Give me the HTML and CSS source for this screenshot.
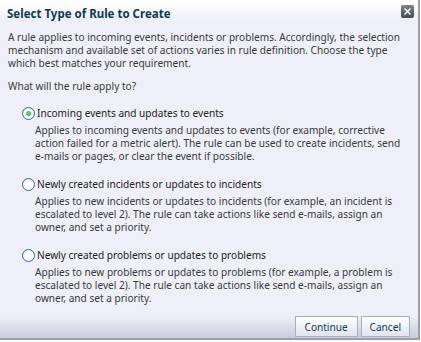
FILE: index.html
```html
<!DOCTYPE html>
<html>
    <head>
        <title>Select Type of Rule to Create</title>
        <link rel="stylesheet" href="styles.css">
    </head>
    <body>
        <div class="dialog">
            <!--HEADER-->
            <div class="dialog-header">
                <span class="dialog-title">Select Type of Rule to Create</span>
                <span class="close-btn">
                    <svg width="9" height="9" viewBox="0 0 9 9">
                        <path d="M1.5 1.5 L7.5 7.5 M7.5 1.5 L1.5 7.5" stroke="#ffffff" stroke-width="1.4" fill="none"/>
                    </svg>
                </span>
            </div>

            <!--BODY-->
            <div class="dialog-body">
                <p class="intro">A rule applies to incoming events, incidents or problems. Accordingly, the selection mechanism and available set of actions varies in rule definition. Choose the type which best matches your requirement.</p>
                <p class="question">What will the rule apply to?</p>

                <div class="option first">
                    <label class="option-label"><span class="radio checked"></span>Incoming events and updates to events</label>
                    <p class="option-desc">Applies to incoming events and updates to events (for example, corrective action failed for a metric alert). The rule can be used to create incidents, send <span class="nowrap">e-mails</span> or pages, or clear the event if possible.</p>
                </div>

                <div class="option">
                    <label class="option-label"><span class="radio"></span>Newly created incidents or updates to incidents</label>
                    <p class="option-desc">Applies to new incidents or updates to incidents (for example, an incident is escalated to level 2). The rule can take actions like send <span class="nowrap">e-mails</span>, assign an owner, and set a priority.</p>
                </div>

                <div class="option">
                    <label class="option-label"><span class="radio"></span>Newly created problems or updates to problems</label>
                    <p class="option-desc">Applies to new problems or updates to problems (for example, a problem is escalated to level 2). The rule can take actions like send <span class="nowrap">e-mails</span>, assign an owner, and set a priority.</p>
                </div>
            </div>

            <!--FOOTER-->
            <div class="dialog-footer">
                <button class="btn continue">Continue</button>
                <button class="btn">Cancel</button>
            </div>
        </div>
    </body>
</html>
```

FILE: styles.css
```css
body{
    margin: 0;
    background-color: #ffffff;
    font-family: "Noto Sans", sans-serif;
}

.dialog{
    width: 418px;
    height: 338px;
    background-color: #eeeff8;
    border-right: 2px solid #9d9fa8;
    border-bottom: 2px solid #9d9fa8;
    display: flex;
    flex-direction: column;
    color: #3a3a3a;
    font-size: 10.1px;
}

.dialog-header{
    height: 26px;
    display: flex;
    align-items: center;
    justify-content: space-between;
    padding: 0 4px 0 7px;
    background: linear-gradient(#ffffff 10%, #eeeff8 80%);
}

.dialog-title{
    font-weight: bold;
    font-size: 11.5px;
    color: #0e3a5a;
    margin-top: 1px;
}

.close-btn{
    width: 13px;
    height: 13px;
    display: flex;
    align-items: center;
    justify-content: center;
    background: linear-gradient(#7b838f, #434b57);
    border-radius: 2px;
    margin-top: -4px;
}

.dialog-body{
    flex: 1;
    padding: 5px 5px 0 8px;
}

.dialog-body p{
    margin: 0;
    line-height: 13px;
}

.nowrap{
    white-space: nowrap;
}

.dialog-body .question{
    margin-top: 10px;
}

.option{
    margin-top: 13px;
    padding-left: 14px;
}

.option.first{
    margin-top: 12px;
}

.option-label{
    display: flex;
    align-items: center;
    height: 16px;
    color: #222222;
}

.radio{
    width: 11px;
    height: 11px;
    border: 1px solid #2f66a6;
    border-radius: 50%;
    background: radial-gradient(circle at 60% 60%, #ffffff 40%, #d8e0ec);
    margin-right: 2px;
    position: relative;
}

.radio.checked::after{
    content: "";
    position: absolute;
    left: 3px;
    top: 3px;
    width: 5px;
    height: 5px;
    border-radius: 50%;
    background: radial-gradient(circle at 40% 40%, #7fd37f, #1f9a2f);
}

.dialog-body .option-desc{
    padding-left: 13px;
    margin-top: 3px;
}

.dialog-footer{
    height: 26px;
    display: flex;
    justify-content: flex-end;
    align-items: flex-start;
    gap: 3px;
    padding: 0 8px 0 0;
    background: linear-gradient(#eeeff8 15%, #c9cdda);
}

.btn{
    font-family: "Noto Sans", sans-serif;
    font-size: 10.1px;
    color: #0f3c66;
    height: 21px;
    padding: 0 8px;
    border: 1px solid #a9aebb;
    border-radius: 0;
    background: linear-gradient(#ffffff, #e1e4ee);
    margin-top: 4px;
}

.btn.continue{
    width: 63px;
}
```
